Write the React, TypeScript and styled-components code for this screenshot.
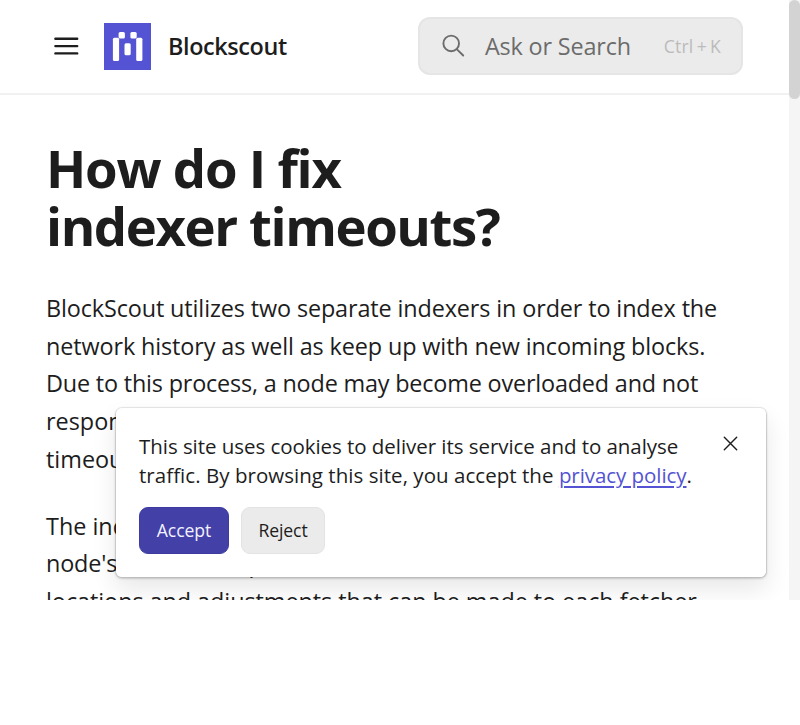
import React from "react";
import styled, { createGlobalStyle } from "styled-components";

const GlobalStyle = createGlobalStyle`
  *, *::before, *::after { box-sizing: border-box; }
  body {
    margin: 0;
    background: #fff;
    color: #1d1d1d;
    font-family: "Open Sans", "Noto Sans", sans-serif;
  }
  h1, p { margin: 0; }
  button { font-family: inherit; }
`;

const Viewport = styled.div`
  position: relative;
  display: flex;
  width: 800px;
  height: 600px;
  overflow: hidden;
`;

const Page = styled.div`
  width: 789px;
  height: 600px;
  overflow: hidden;
`;

const ScrollTrack = styled.div`
  position: relative;
  z-index: 3;
  width: 11px;
  height: 600px;
  background: #f5f5f5;
`;

const ScrollThumb = styled.div`
  height: 99px;
  border-radius: 6px;
  background: #d3d3d3;
`;

const Header = styled.header`
  display: flex;
  align-items: center;
  height: 95px;
  padding: 0 46px 1px 53px;
  border-bottom: 2px solid #f1f1f1;
`;

const MenuButton = styled.button`
  display: flex;
  padding: 0;
  border: 0;
  background: none;
`;

const Logo = styled.svg`
  display: block;
  width: 47px;
  height: 47px;
  margin-left: 25px;
`;

const Brand = styled.div`
  margin-left: 17px;
  font-size: 23.4px;
  font-weight: 600;
  line-height: 32px;
  letter-spacing: -0.38px;
  white-space: nowrap;
`;

const Search = styled.div`
  display: flex;
  align-items: center;
  width: 325px;
  height: 58px;
  margin: 0 0 1px auto;
  padding: 0 20px 0 21px;
  border: 2px solid #e5e5e5;
  border-radius: 12px;
  background: #ebebeb;
  color: #6c6c6c;
`;

const Placeholder = styled.span`
  margin-left: 20px;
  font-size: 23.4px;
  letter-spacing: -0.17px;
  white-space: nowrap;
`;

const Shortcut = styled.span`
  margin-left: auto;
  color: #bbb;
  font-size: 17.6px;
  letter-spacing: 0.15px;
  word-spacing: -1.5px;
  white-space: nowrap;
`;

const Article = styled.main`
  padding: 44px 46px 0;
`;

const Title = styled.h1`
  font-size: 52.7px;
  font-weight: 700;
  line-height: 58px;
`;

const Paragraph = styled.p`
  margin-top: 29.5px;
  font-size: 23.4px;
  line-height: 37.6px;
  white-space: nowrap;

  ${Title} + & {
    margin-top: 35.3px;
  }
`;

const Line = styled.span<{ $tracking?: number }>`
  display: block;
  letter-spacing: ${(p) => p.$tracking ?? 0}px;
`;

const CookieBanner = styled.div`
  position: absolute;
  z-index: 2;
  left: 115px;
  top: 407px;
  width: 652px;
  height: 171px;
  padding: 24px 23px;
  border: 1px solid rgba(0, 0, 0, 0.06);
  border-radius: 7px;
  background: #fff;
  background-clip: padding-box;
  box-shadow: 0 1px 2px rgba(0, 0, 0, 0.16), 0 12px 24px rgba(0, 0, 0, 0.09);
`;

const BannerText = styled.p`
  font-size: 20.5px;
  line-height: 29px;
  white-space: nowrap;
`;

const PolicyLink = styled.a`
  color: #5353d3;
  letter-spacing: -0.06px;
  text-decoration: underline;
  text-decoration-thickness: 2px;
  text-underline-offset: 3px;
`;

const Actions = styled.div`
  display: flex;
  gap: 12px;
  margin-top: 17px;
`;

const ActionButton = styled.button<{ $primary?: boolean; $width: number }>`
  width: ${(p) => p.$width}px;
  height: 47px;
  padding: 0 0 1px;
  border: 1px solid ${(p) => (p.$primary ? "#3d3b9f" : "#e3e3e3")};
  border-radius: 9px;
  background: ${(p) => (p.$primary ? "#4340a8" : "#ebebeb")};
  color: ${(p) => (p.$primary ? "#f3f2ff" : "#1d1d1d")};
  font-size: 17.6px;
  letter-spacing: -0.1px;
`;

const CloseButton = styled.button`
  position: absolute;
  top: 28px;
  right: 28px;
  display: flex;
  padding: 0;
  border: 0;
  background: none;
`;

export default function App() {
  return (
    <>
      <GlobalStyle />
      <Viewport>
        <Page>
          <Header>
            <MenuButton aria-label="Open menu">
              <svg width="26" height="20" viewBox="0 0 26 20" stroke="#1d1d1d" strokeWidth="2.4" strokeLinecap="round">
                <path d="M2.4 2.8h21.8M2.4 10.1h21.8M2.4 17.4h21.8" />
              </svg>
            </MenuButton>
            <Logo viewBox="0 0 47 47" aria-label="Blockscout logo">
              <rect width="47" height="47" fill="#5353d3" />
              <g fill="#fff">
                <rect x="14.6" y="9" width="6.3" height="6.6" rx="1.5" />
                <rect x="26.4" y="9" width="6.3" height="6.6" rx="1.5" />
                <rect x="8.9" y="14.8" width="6.2" height="23.2" rx="1.5" />
                <rect x="32.2" y="14.8" width="6.2" height="23.2" rx="1.5" />
                <rect x="20.5" y="20.3" width="6.2" height="12" rx="1.5" />
              </g>
            </Logo>
            <Brand>Blockscout</Brand>
            <Search>
              <svg width="24" height="24" viewBox="0 0 24 24" fill="none" stroke="#6c6c6c" strokeWidth="1.9" strokeLinecap="round">
                <circle cx="10.2" cy="9.4" r="7.8" />
                <path d="M16 15.3l6.2 6.2" />
              </svg>
              <Placeholder>Ask or Search</Placeholder>
              <Shortcut>Ctrl + K</Shortcut>
            </Search>
          </Header>
          <Article>
            <Title>
              <Line $tracking={-1.23}>How do I fix</Line>
              <Line $tracking={-1.42}>indexer timeouts?</Line>
            </Title>
            <Paragraph>
              <Line $tracking={-0.12}>BlockScout utilizes two separate indexers in order to index the</Line>
              <Line $tracking={-0.115}>network history as well as keep up with new incoming blocks.</Line>
              <Line $tracking={-0.18}>Due to this process, a node may become overloaded and not</Line>
              <Line>respond to requests in time, which results in indexer</Line>
              <Line>timeouts.</Line>
            </Paragraph>
            <Paragraph>
              <Line>The indexer contains several fetchers that use the</Line>
              <Line $tracking={-0.15}>node's connection pool. Below are the relevant</Line>
              <Line $tracking={-0.05}>locations and adjustments that can be made to each fetcher.</Line>
            </Paragraph>
          </Article>
        </Page>
        <ScrollTrack>
          <ScrollThumb />
        </ScrollTrack>
        <CookieBanner>
          <BannerText>
            <Line $tracking={-0.05}>This site uses cookies to deliver its service and to analyse</Line>
            <Line $tracking={0.04}>
              traffic. By browsing this site, you accept the <PolicyLink>privacy policy</PolicyLink>.
            </Line>
          </BannerText>
          <Actions>
            <ActionButton $primary $width={90}>Accept</ActionButton>
            <ActionButton $width={84}>Reject</ActionButton>
          </Actions>
          <CloseButton aria-label="Close">
            <svg width="15" height="15" viewBox="0 0 15 15" stroke="#1d1d1d" strokeWidth="1.4" strokeLinecap="round">
              <path d="M1.3 1.3l12.4 12.4M13.7 1.3L1.3 13.7" />
            </svg>
          </CloseButton>
        </CookieBanner>
      </Viewport>
    </>
  );
}
